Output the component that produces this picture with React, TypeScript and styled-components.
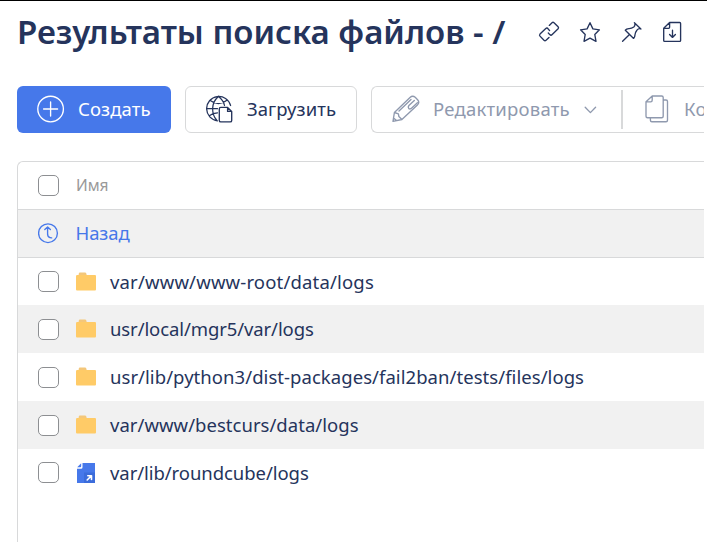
import React from "react";
import styled, { createGlobalStyle } from "styled-components";

const navy = "#25345c";
const muted = "#8f99ae";
const blue = "#4678ea";
const line = "#d8d9da";
const stripe = "#f1f1f1";

const GlobalStyle = createGlobalStyle`
  *, *::before, *::after { box-sizing: border-box; }
  body {
    margin: 0;
    background: #fff;
    color: ${navy};
    font-family: "Noto Sans", "Open Sans", sans-serif;
    font-size: 18.5px;
  }
`;

const Page = styled.main`
  height: 542px;
  border-top: 1px solid #000;
  padding: 0 3px 0 17px;
  overflow: hidden;
`;

const Header = styled.header`
  display: flex;
  align-items: center;
  height: 61px;
`;

const Title = styled.h1`
  width: 521px;
  margin: 0;
  font-size: 33px;
  line-height: 45px;
  font-weight: 600;
  letter-spacing: 0;
  white-space: nowrap;
`;

const HeaderIcons = styled.div`
  display: flex;
  gap: 19.3px;
`;

const Icon = styled.svg<{ $size: number }>`
  display: block;
  flex: none;
  width: ${(p) => p.$size}px;
  height: ${(p) => p.$size}px;
  fill: none;
  stroke: currentColor;
  stroke-width: 1.35;
  stroke-linecap: round;
  stroke-linejoin: round;
`;

const Toolbar = styled.div`
  display: flex;
  gap: 14px;
  margin-top: 24px;
  height: 47px;
`;

const Button = styled.button<{ $primary?: boolean; $width: number }>`
  display: flex;
  align-items: center;
  flex: none;
  gap: 13px;
  width: ${(p) => p.$width}px;
  padding: 0 0 2px 20px;
  border: ${(p) => (p.$primary ? "0" : `1px solid ${line}`)};
  border-radius: 6px;
  background: ${(p) => (p.$primary ? blue : "#fff")};
  color: ${(p) => (p.$primary ? "#fff" : navy)};
  font: inherit;
  white-space: nowrap;
`;

const Group = styled.div`
  display: flex;
  align-items: center;
  flex: 1;
  min-width: 0;
  overflow: hidden;
  border: 1px solid ${line};
  border-right: 0;
  border-radius: 6px 0 0 6px;
  color: ${muted};
`;

const GroupItem = styled.div<{ $width: number }>`
  display: flex;
  align-items: center;
  flex: none;
  gap: 13px;
  width: ${(p) => p.$width}px;
  padding: 0 0 2px 20px;
  white-space: nowrap;
`;

const Divider = styled.span`
  flex: none;
  width: 2px;
  height: 39px;
  background: ${line};
`;

const Label = styled.span<{ $spacing?: number }>`
  line-height: 26px;
  letter-spacing: ${(p) => p.$spacing ?? 0}px;
  white-space: nowrap;
`;

const Table = styled.section`
  height: 400px;
  margin-top: 28px;
  border: 1px solid ${line};
  border-right: 0;
  border-radius: 6px 0 0 0;
`;

const Row = styled.div<{ $height: number; $shaded?: boolean; $ruled?: boolean }>`
  display: flex;
  align-items: center;
  height: ${(p) => p.$height}px;
  padding-left: 20px;
  background: ${(p) => (p.$shaded ? stripe : "transparent")};
  border-bottom: ${(p) => (p.$ruled ? `1px solid ${line}` : "0")};
`;

const Checkbox = styled.span`
  flex: none;
  width: 21px;
  height: 21px;
  margin-right: 17px;
  border: 1px solid #8d8f92;
  border-radius: 5px;
  background: #fff;
`;

const HeadLabel = styled.span`
  padding-bottom: 2px;
  color: #999;
  font-size: 15.5px;
  line-height: 22px;
`;

const BackLink = styled.a`
  display: flex;
  align-items: center;
  gap: 15.5px;
  padding-bottom: 2px;
  color: ${blue};
`;

const FileIcon = styled.span`
  display: block;
  flex: none;
  width: 34px;
`;

const LinkIcon = () => (
  <Icon $size={22} viewBox="0 0 22 22">
    <path d="M11.6 9.6 10 7.7Q9 6.4 7.8 7.4L2 13.1Q1.1 14.1 2 15.1L6 19.3Q7 20.2 8 19.3L11 16.4M10.3 12 11.8 13.6Q13 14.8 14.2 13.6L20.1 7.8Q21 6.8 20.1 5.8L16 1.7Q15 .9 14 1.7L11.3 4.4" />
  </Icon>
);
const StarIcon = () => (
  <Icon $size={22} viewBox="0 0 22 22">
    <path d="M11 1.7 13.9 7.9 20.4 8.8 15.8 13.5 17 20.3 11 17.1 5 20.3 6.2 13.5 1.6 8.8 8.1 7.9Z" />
  </Icon>
);
const PinIcon = () => (
  <Icon $size={22} viewBox="0 0 22 22">
    <path d="M1.6 20.2 8 13.9M13.4 1.7 19.9 8M14 2.4Q14.2 4.8 12.8 6 10.5 7.7 7.8 7.6 5.4 7.8 4.3 9.2L12.6 17.4Q13.9 16.2 13.9 14.2 14.1 11.3 15.9 9.2 17.1 7.6 19.2 7.7" />
  </Icon>
);
const SaveIcon = () => (
  <Icon $size={22} viewBox="0 0 22 22">
    <path d="M7.6 1.5H17.7Q18.6 1.5 18.6 2.4V19.4Q18.6 20.3 17.7 20.3H2.6Q1.7 20.3 1.7 19.4V7.3ZM7.6 1.5V6.3Q7.6 7.3 6.6 7.3H1.7M10.5 9.2V16.2M7.6 13.5 10.5 16.4 13.4 13.5" />
  </Icon>
);
const PlusIcon = () => (
  <Icon $size={28} viewBox="0 0 28 28">
    <circle cx="13.6" cy="14" r="12.8" />
    <path d="M13.6 7V21M6.6 14H20.6" />
  </Icon>
);
const GlobeIcon = () => (
  <Icon $size={28} viewBox="0 0 28 28">
    <path d="M11.5 25.8A12.2 12.2 0 1 1 24.6 10.5M10.6 25Q6.7 20.8 6.6 13.7 6.8 6 12.5 1.4M12.5 1.4Q17.5 5.2 18.5 10.5M4.3 5.6Q12.5 12 20.9 5.2M.7 13.7H11.5M3.7 20.5Q6.8 18 11.5 17.8" strokeWidth="1.25" />
    <path d="M14.8 12.4H21.6L25.7 16.4V25.4Q25.7 26.9 24.2 26.9H14.8Q13.3 26.9 13.3 25.4V13.9Q13.3 12.4 14.8 12.4ZM21.6 12.4V16.4H25.7" />
  </Icon>
);
const PencilIcon = () => (
  <Icon $size={28} viewBox="0 0 28 28">
    <path d="M1 26.4 2.4 17.5 18 2.5Q20.6.2 23.2 2.3L25.6 4.7Q28 7.4 25.4 10L9.9 24.5ZM2.4 17.5 6.4 18.8 6.9 21.6 9.9 24.5M1.5 22.9 4.5 25.4" />
    <path d="M7 16 19 4.4M22.3 5.4 16.9 10.5Q15.5 12.1 16.9 13.7 18.3 14.5 19.8 13.1L25.4 7.8" />
  </Icon>
);
const CopyIcon = () => (
  <Icon $size={28} viewBox="0 0 28 28">
    <path d="M9.2 1H18.7Q20.2 1 20.2 2.5V21.2Q20.2 22.7 18.7 22.7H4.5Q3 22.7 3 21.2V6.8ZM9.2 1V5.3Q9.2 6.8 7.7 6.8H3M20.2 5H23Q24.5 5 24.5 6.5V25.2Q24.5 26.7 23 26.7H8.9Q7.4 26.7 7.4 25.2V22.7" />
  </Icon>
);
const ChevronIcon = () => (
  <Icon $size={14} viewBox="0 0 14 14">
    <path d="M2.2 5.2 7.4 10.6 12.6 5.2" />
  </Icon>
);
const BackIcon = () => (
  <Icon $size={22} viewBox="0 0 22 22">
    <circle cx="10" cy="11.2" r="9.4" />
    <path d="M6.8 7.5 9.6 4.9 12.4 7.5M9.6 5.2V12.4Q9.8 15.8 13.7 15.9" />
  </Icon>
);
const FolderIcon = () => (
  <Icon $size={20} viewBox="0 0 20 20">
    <path d="M2.7 4V2Q2.8.6 4 .6H9.2Q10.3.6 10.7 3V4Z" fill="#f4c77a" stroke="none" />
    <path d="M1.2 3H19Q20 3 20 4V17.6Q20 18.6 19 18.6H1Q0 18.6 0 17.6V4.2Q0 3 1.2 3Z" fill="#ffcb67" stroke="none" />
  </Icon>
);
const ShortcutIcon = () => (
  <Icon $size={20} viewBox="0 0 20 20">
    <path d="M6.5 0H19V20H1V5.8H5Q6.5 5.8 6.5 4.3Z" fill={blue} stroke="none" />
    <path d="M1.2 4.2 5.2.2V3.2Q5.2 4.2 4.2 4.2Z" fill={blue} stroke="none" />
    <path d="M8 9.5H19V20H8Z" fill="#3b6cdb" stroke="none" />
    <path d="M11.2 17 15.3 12.9M11.8 12.8H15.5V16.5" stroke="#fff" strokeWidth="1.6" />
  </Icon>
);

type Entry = { path: string; spacing: number; height: number; shortcut?: boolean };

const entries: Entry[] = [
  { path: "var/www/www-root/data/logs", spacing: 0.17, height: 47 },
  { path: "usr/local/mgr5/var/logs", spacing: -0.1, height: 48 },
  { path: "usr/lib/python3/dist-packages/fail2ban/tests/files/logs", spacing: 0.055, height: 48 },
  { path: "var/www/bestcurs/data/logs", spacing: 0.03, height: 48 },
  { path: "var/lib/roundcube/logs", spacing: -0.06, height: 47, shortcut: true },
];

export default function App() {
  return (
    <Page>
      <GlobalStyle />
      <Header>
        <Title>Результаты поиска файлов - /</Title>
        <HeaderIcons>
          <LinkIcon />
          <StarIcon />
          <PinIcon />
          <SaveIcon />
        </HeaderIcons>
      </Header>
      <Toolbar>
        <Button $primary $width={154}>
          <PlusIcon />
          <Label $spacing={0.1}>Создать</Label>
        </Button>
        <Button $width={172}>
          <GlobeIcon />
          <Label $spacing={0.08}>Загрузить</Label>
        </Button>
        <Group>
          <GroupItem $width={249}>
            <PencilIcon />
            <Label $spacing={0.23}>Редактировать</Label>
            <ChevronIcon />
          </GroupItem>
          <Divider />
          <GroupItem $width={200}>
            <CopyIcon />
            <Label $spacing={0.2}>Копировать</Label>
          </GroupItem>
        </Group>
      </Toolbar>
      <Table>
        <Row $height={48} $ruled>
          <Checkbox />
          <HeadLabel>Имя</HeadLabel>
        </Row>
        <Row $height={48} $shaded $ruled>
          <BackLink>
            <BackIcon />
            <Label $spacing={-0.1}>Назад</Label>
          </BackLink>
        </Row>
        {entries.map((entry, i) => (
          <Row key={entry.path} $height={entry.height} $shaded={i % 2 === 1}>
            <Checkbox />
            <FileIcon>{entry.shortcut ? <ShortcutIcon /> : <FolderIcon />}</FileIcon>
            <Label $spacing={entry.spacing}>{entry.path}</Label>
          </Row>
        ))}
      </Table>
    </Page>
  );
}
